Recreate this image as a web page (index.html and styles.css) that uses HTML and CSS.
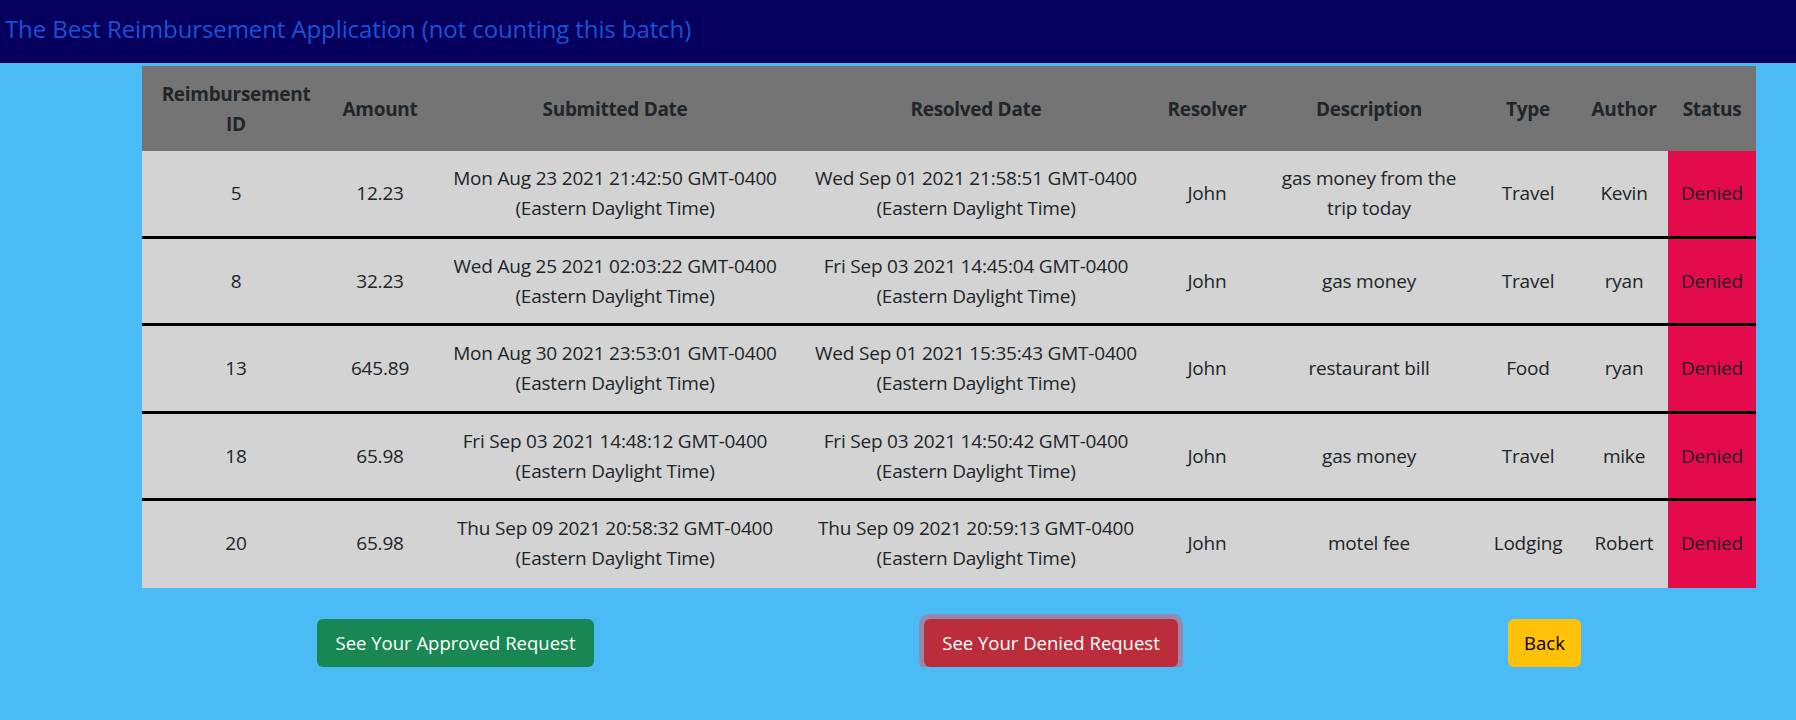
FILE: index.html
```html
<!DOCTYPE html>
<html lang="en">
<head>
<meta charset="utf-8">
<title>Reimbursements</title>
<link rel="stylesheet" href="styles.css">
</head>
<body>
<header class="topbar">
  <h1 class="title">The Best Reimbursement Application (not counting this batch)</h1>
</header>
<main class="content">
  <table class="reimb">
    <colgroup>
      <col class="c-id"><col class="c-amount"><col class="c-sub"><col class="c-res"><col class="c-resolver"><col class="c-desc"><col class="c-type"><col class="c-author"><col class="c-status">
    </colgroup>
    <thead>
      <tr>
        <th>Reimbursement ID</th><th>Amount</th><th>Submitted Date</th><th>Resolved Date</th><th>Resolver</th><th>Description</th><th>Type</th><th>Author</th><th>Status</th>
      </tr>
    </thead>
    <tbody>
      <tr>
        <td>5</td><td>12.23</td>
        <td><span class="nw">Mon Aug 23 2021 21:42:50 GMT-0400</span> <span class="nw">(Eastern Daylight Time)</span></td>
        <td><span class="nw">Wed Sep 01 2021 21:58:51 GMT-0400</span> <span class="nw">(Eastern Daylight Time)</span></td>
        <td>John</td><td>gas money from the trip today</td><td>Travel</td><td>Kevin</td><td class="status">Denied</td>
      </tr>
      <tr>
        <td>8</td><td>32.23</td>
        <td><span class="nw">Wed Aug 25 2021 02:03:22 GMT-0400</span> <span class="nw">(Eastern Daylight Time)</span></td>
        <td><span class="nw">Fri Sep 03 2021 14:45:04 GMT-0400</span> <span class="nw">(Eastern Daylight Time)</span></td>
        <td>John</td><td>gas money</td><td>Travel</td><td>ryan</td><td class="status">Denied</td>
      </tr>
      <tr>
        <td>13</td><td>645.89</td>
        <td><span class="nw">Mon Aug 30 2021 23:53:01 GMT-0400</span> <span class="nw">(Eastern Daylight Time)</span></td>
        <td><span class="nw">Wed Sep 01 2021 15:35:43 GMT-0400</span> <span class="nw">(Eastern Daylight Time)</span></td>
        <td>John</td><td>restaurant bill</td><td>Food</td><td>ryan</td><td class="status">Denied</td>
      </tr>
      <tr>
        <td>18</td><td>65.98</td>
        <td><span class="nw">Fri Sep 03 2021 14:48:12 GMT-0400</span> <span class="nw">(Eastern Daylight Time)</span></td>
        <td><span class="nw">Fri Sep 03 2021 14:50:42 GMT-0400</span> <span class="nw">(Eastern Daylight Time)</span></td>
        <td>John</td><td>gas money</td><td>Travel</td><td>mike</td><td class="status">Denied</td>
      </tr>
      <tr>
        <td>20</td><td>65.98</td>
        <td><span class="nw">Thu Sep 09 2021 20:58:32 GMT-0400</span> <span class="nw">(Eastern Daylight Time)</span></td>
        <td><span class="nw">Thu Sep 09 2021 20:59:13 GMT-0400</span> <span class="nw">(Eastern Daylight Time)</span></td>
        <td>John</td><td>motel fee</td><td>Lodging</td><td>Robert</td><td class="status">Denied</td>
      </tr>
    </tbody>
  </table>
  <div class="actions">
    <button class="btn btn-success" type="button">See Your Approved Request</button>
    <button class="btn btn-danger is-focused" type="button">See Your Denied Request</button>
    <button class="btn btn-warning" type="button">Back</button>
  </div>
</main>
</body>
</html>
```

FILE: styles.css
```css
* { box-sizing: border-box; }

body {
  margin: 0;
  background: #4abbf5;
  font-family: "Open Sans", "Noto Sans", sans-serif;
  color: #212529;
}

.topbar {
  height: 63px;
  background: #05005e;
  display: flex;
  align-items: center;
  padding: 0 0 6px 5px;
}

.title {
  margin: 0;
  font-size: 24px;
  font-weight: 400;
  color: #1b52d4;
  letter-spacing: -0.1px;
}

.content {
  padding: 3px 40px 0 142px;
}

.reimb {
  width: 100%;
  border-collapse: collapse;
  table-layout: fixed;
  font-size: 19px;
  line-height: 30px;
  text-align: center;
}

.c-id { width: 188px; }
.c-amount { width: 100px; }
.c-sub { width: 370px; }
.c-res { width: 352px; }
.c-resolver { width: 110px; }
.c-desc { width: 214px; }
.c-type { width: 104px; }
.c-author { width: 88px; }
.c-status { width: 88px; }

.reimb th {
  background: #747474;
  font-weight: 700;
  padding: 12.5px 8px;
  color: #212529;
  letter-spacing: -0.3px;
}

.reimb td {
  background: #d3d3d3;
  padding: 12px 8px 12.5px;
  letter-spacing: -0.2px;
}

.reimb tbody tr { border-bottom: 3px solid #000; }
.reimb tbody tr:last-child { border-bottom: 0; }
.reimb tbody tr:last-child td { padding-bottom: 14.5px; }

.reimb td.status {
  background: #e30b4c;
  color: #2a1e24;
}

.nw { white-space: nowrap; }

.actions {
  display: flex;
  justify-content: space-around;
  align-items: center;
  margin: 31px 10px 0;
}

.btn {
  font-family: inherit;
  font-size: 18.5px;
  line-height: 30px;
  padding: 8px 15px;
  border: 1px solid transparent;
  border-radius: 6px;
  cursor: pointer;
}

.btn-success { background: #198754; color: #fff; width: 277px; }
.btn-danger { background: #bb2d3b; color: #fff; width: 254px; }
.btn-danger.is-focused { box-shadow: 0 0 0 5px rgba(225, 83, 97, 0.5); }
.btn-warning { background: #ffc107; color: #000; width: 73px; padding: 8px 0; }
```
